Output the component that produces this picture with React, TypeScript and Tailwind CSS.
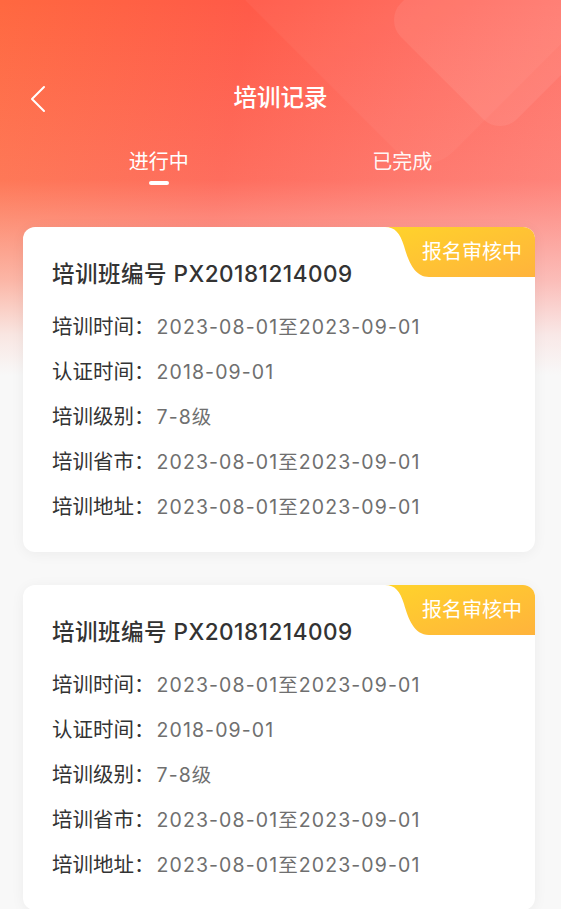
import React from "react";

const rows: [string, string][] = [
  ["培训时间：", "2023-08-01至2023-09-01"],
  ["认证时间：", "2018-09-01"],
  ["培训级别：", "7-8级"],
  ["培训省市：", "2023-08-01至2023-09-01"],
  ["培训地址：", "2023-08-01至2023-09-01"],
];

const FONT = '"Inter", "Noto Sans CJK SC", "Noto Sans", sans-serif';

function Badge({ id }: { id: string }) {
  return (
    <div className="absolute right-0 top-0 h-[50px] w-[150px]">
      <svg width="150" height="50" viewBox="0 0 150 50" className="absolute inset-0">
        <defs>
          <linearGradient id={id} x1="0" y1="0" x2="1" y2="1">
            <stop offset="0" stopColor="#ffd32b" />
            <stop offset="1" stopColor="#ffb33c" />
          </linearGradient>
        </defs>
        <path d="M0 0 H150 V50 H44 C29 50 23 33 19 19 C15 6 10 0 0 0 Z" fill={`url(#${id})`} />
      </svg>
      <div className="relative flex h-full items-center justify-end pr-[13px] text-[20px] leading-none text-white">
        报名审核中
      </div>
    </div>
  );
}

function Card({ id }: { id: string }) {
  return (
    <div className="relative ml-[23px] mr-[26px] overflow-hidden rounded-[12px] bg-white pl-[29px] pr-4 pb-[22px] pt-[31px] shadow-[0_2px_14px_rgba(0,0,0,0.05)]">
      <Badge id={id} />
      <div className="text-[22.5px] font-medium leading-[32px] tracking-[0.5px] text-[#333333]">培训班编号 PX20181214009</div>
      <div className="mt-[15px] flex flex-col">
        {rows.map(([k, v]) => (
          <div key={k} className="flex h-[45px] items-center text-[20.5px]">
            <span className="text-[#333333]">{k}</span>
            <span className="ml-[2px] text-[19.5px] tracking-[1.1px] text-[#6f6f6f]">{v}</span>
          </div>
        ))}
      </div>
    </div>
  );
}

export default function App() {
  return (
    <div
      className="relative min-h-[909px] w-full overflow-hidden bg-[#f8f8f8] bg-[linear-gradient(180deg,rgba(248,248,248,0)_0px,rgba(248,248,248,0.12)_180px,rgba(248,248,248,0.55)_280px,rgba(248,248,248,0.88)_335px,#f8f8f8_375px),linear-gradient(100deg,#ff6840_0%,#ff5a48_40%,#ff6a5e_75%,#ff766c_100%)] bg-[length:100%_100%,100%_380px] bg-no-repeat pb-10"
      style={{ fontFamily: FONT }}
    >
      {/* decorative shapes */}
      <div className="pointer-events-none absolute left-[418px] top-[-62px] h-[164px] w-[164px] rotate-45 rounded-[24px] bg-white/[0.07]" />
      <div className="pointer-events-none absolute left-[280px] top-[-170px] h-[290px] w-[290px] rotate-45 rounded-[40px] bg-white/[0.04]" />

      <div className="relative">
        <div className="h-[74px]" />
        <div className="relative flex h-[48px] items-center justify-center">
          <svg className="absolute left-[28px] top-[11px]" width="20" height="28" viewBox="0 0 20 28">
            <path d="M16 2 L4 14 L16 26" fill="none" stroke="#ffffff" strokeWidth="2" strokeLinecap="round" strokeLinejoin="round" />
          </svg>
          <div className="text-[23.5px] font-medium text-white">培训记录</div>
        </div>
        <div className="mt-[26px] grid grid-cols-2 px-[37px]">
          <div className="flex flex-col items-center">
            <div className="text-[20px] leading-[28px] text-white">进行中</div>
            <div className="mt-[5px] h-[4px] w-[20px] rounded-full bg-white" />
          </div>
          <div className="flex flex-col items-center">
            <div className="text-[20px] leading-[28px] text-white/95">已完成</div>
          </div>
        </div>
        <div className="mt-[42px] flex flex-col gap-[33px]">
          <Card id="g1" />
          <Card id="g2" />
        </div>
      </div>
    </div>
  );
}
